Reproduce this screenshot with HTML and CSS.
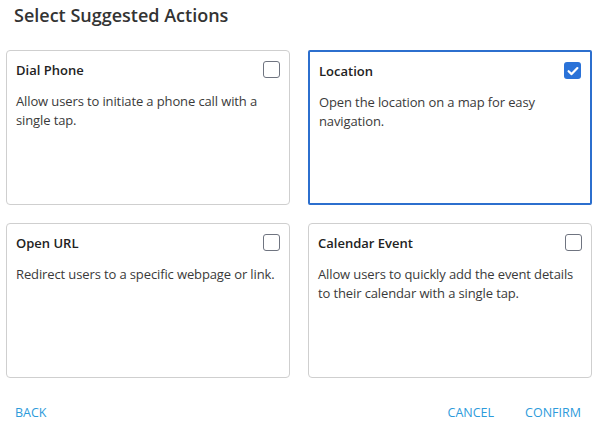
FILE: index.html
```html
<!DOCTYPE html>
<html lang="en">
<head>
<meta charset="utf-8">
<title>Select Suggested Actions</title>
<link rel="stylesheet" href="styles.css">
</head>
<body>
<div class="dialog">
  <h1 class="title">Select Suggested Actions</h1>
  <div class="grid">
    <div class="card">
      <div class="card-head">
        <span class="card-title">Dial Phone</span>
        <span class="check"></span>
      </div>
      <p class="card-desc">Allow users to initiate a phone call with a single tap.</p>
    </div>
    <div class="card selected">
      <div class="card-head">
        <span class="card-title">Location</span>
        <span class="check checked"><svg viewBox="0 0 16 16" width="16" height="16"><path d="M3.6 8.2 L6.6 11.1 L12.4 5.1" fill="none" stroke="#fff" stroke-width="2.2" stroke-linecap="round" stroke-linejoin="round"/></svg></span>
      </div>
      <p class="card-desc">Open the location on a map for easy navigation.</p>
    </div>
    <div class="card">
      <div class="card-head">
        <span class="card-title">Open URL</span>
        <span class="check"></span>
      </div>
      <p class="card-desc">Redirect users to a specific webpage or link.</p>
    </div>
    <div class="card">
      <div class="card-head">
        <span class="card-title">Calendar Event</span>
        <span class="check"></span>
      </div>
      <p class="card-desc">Allow users to quickly add the event details to their calendar with a single tap.</p>
    </div>
  </div>
  <div class="footer">
    <button class="btn">BACK</button>
    <div class="footer-right">
      <button class="btn">CANCEL</button>
      <button class="btn">CONFIRM</button>
    </div>
  </div>
</div>
</body>
</html>
```

FILE: styles.css
```css
* { box-sizing: border-box; }
html, body { margin: 0; padding: 0; background: #fff; }
body {
  font-family: "Open Sans", "Noto Sans", sans-serif;
  color: #333;
  width: 596px;
  height: 424px;
  overflow: hidden;
}
.dialog {
  padding: 0 4px 0 6px;
}
.title {
  margin: 0;
  padding: 3px 0 0 8px;
  height: 50px;
  font-size: 18px;
  font-weight: 600;
  line-height: 24px;
  color: #333;
}
.grid {
  display: grid;
  grid-template-columns: 284px 284px;
  grid-auto-rows: 155px;
  column-gap: 18px;
  row-gap: 18px;
}
.card {
  border: 1px solid #cfcfcf;
  border-radius: 4px;
  padding: 9px 9px;
  background: #fff;
}
.card.selected {
  border: 2px solid #2c6fce;
  border-radius: 2px;
}
.card-head {
  display: flex;
  justify-content: space-between;
  align-items: flex-start;
  height: 20px;
}
.card-title {
  font-size: 13px;
  font-weight: 600;
  line-height: 20px;
  color: #222;
}
.check {
  width: 17px;
  height: 17px;
  margin-top: 1px;
  border: 1.5px solid #6f7480;
  border-radius: 3px;
  display: flex;
  align-items: center;
  justify-content: center;
}
.check.checked {
  border: none;
  background: #2a72d8;
}
.card-desc {
  margin: 12px 0 0;
  font-size: 13px;
  letter-spacing: -0.12px;
  line-height: 19px;
  color: #3a3a3a;
}
.footer {
  display: flex;
  justify-content: space-between;
  align-items: center;
  margin-top: 26px;
  padding-right: 2px;
}
.footer-right {
  display: flex;
  gap: 13px;
}
.btn {
  border: none;
  background: none;
  padding: 0 9px;
  font-family: "Open Sans", "Noto Sans", sans-serif;
  font-size: 12.5px;
  line-height: 18px;
  color: #2d9bdb;
  cursor: pointer;
}
```
